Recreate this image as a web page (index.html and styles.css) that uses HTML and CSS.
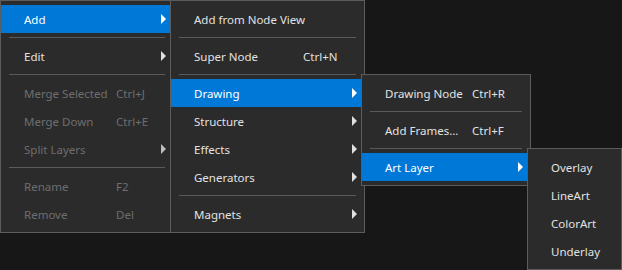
FILE: index.html
```html
<!DOCTYPE html>
<html lang="en">
<head>
  <meta charset="UTF-8">
  <title>Layer Menu</title>
  <link rel="stylesheet" href="styles.css">
</head>
<body>
  <!-- Menu principal -->
  <div class="menu menu-main">
    <div class="item open">
      <span class="label">Add</span>
      <span class="arrow"></span>

      <!-- Submenu Add -->
      <div class="menu submenu menu-add">
        <div class="item"><span class="label">Add from Node View</span></div>
        <div class="sep"></div>
        <div class="item"><span class="label">Super Node</span><span class="shortcut">Ctrl+N</span></div>
        <div class="sep"></div>
        <div class="item open">
          <span class="label">Drawing</span>
          <span class="arrow"></span>

          <!-- Submenu Drawing -->
          <div class="menu submenu menu-drawing">
            <div class="item"><span class="label">Drawing Node</span><span class="shortcut">Ctrl+R</span></div>
            <div class="sep"></div>
            <div class="item"><span class="label">Add Frames...</span><span class="shortcut">Ctrl+F</span></div>
            <div class="sep"></div>
            <div class="item open">
              <span class="label">Art Layer</span>
              <span class="arrow"></span>

              <!-- Submenu Art Layer -->
              <div class="menu submenu menu-art">
                <div class="item"><span class="label">Overlay</span></div>
                <div class="item"><span class="label">LineArt</span></div>
                <div class="item"><span class="label">ColorArt</span></div>
                <div class="item"><span class="label">Underlay</span></div>
              </div>
            </div>
          </div>
        </div>
        <div class="item"><span class="label">Structure</span><span class="arrow"></span></div>
        <div class="item"><span class="label">Effects</span><span class="arrow"></span></div>
        <div class="item"><span class="label">Generators</span><span class="arrow"></span></div>
        <div class="sep"></div>
        <div class="item"><span class="label">Magnets</span><span class="arrow"></span></div>
      </div>
    </div>
    <div class="sep"></div>
    <div class="item"><span class="label">Edit</span><span class="arrow"></span></div>
    <div class="sep"></div>
    <div class="item disabled"><span class="label">Merge Selected</span><span class="shortcut">Ctrl+J</span></div>
    <div class="item disabled"><span class="label">Merge Down</span><span class="shortcut">Ctrl+E</span></div>
    <div class="item disabled"><span class="label">Split Layers</span><span class="arrow"></span></div>
    <div class="sep"></div>
    <div class="item disabled"><span class="label">Rename</span><span class="shortcut">F2</span></div>
    <div class="item disabled"><span class="label">Remove</span><span class="shortcut">Del</span></div>
  </div>
</body>
</html>
```

FILE: styles.css
```css
body {
  margin: 0;
  background: #171717;
  font-family: 'Noto Sans', 'Open Sans', sans-serif;
  font-size: 11.5px;
  height: 270px;
  overflow: hidden;
}

.menu {
  background: #2b2b2b;
  border: 1px solid #5c5c5c;
  padding: 4px 0;
  color: #e2e2e2;
  box-sizing: border-box;
}

.menu-main {
  width: 174px;
}

.menu-add {
  width: 195px;
}

.menu-drawing {
  width: 170px;
}

.menu-art {
  width: 95px;
}

/* submenus open to the right of their item, overlapping 3px */
.submenu {
  position: absolute;
  left: calc(100% - 3px);
  top: -5px;
}

.item {
  position: relative;
  display: flex;
  align-items: center;
  height: 28px;
  padding: 0 7px 0 23px;
  white-space: nowrap;
}

.item.open {
  background: #0078d7;
  color: #fff;
}

.item.disabled {
  color: #6e6e6e;
}

.menu-main .label {
  width: 92px;
}

.menu-add .label {
  width: 109px;
}

.menu-drawing .label {
  width: 87px;
}

.arrow {
  margin-left: auto;
  width: 0;
  height: 0;
  border-left: 5px solid #e0e0e0;
  border-top: 5px solid transparent;
  border-bottom: 5px solid transparent;
}

.item.open > .arrow {
  border-left-color: #fff;
}

.item.disabled .arrow {
  border-left-color: #bdbdbd;
}

.sep {
  height: 1px;
  margin: 4px 8px;
  background: #5a5a5a;
}
```
